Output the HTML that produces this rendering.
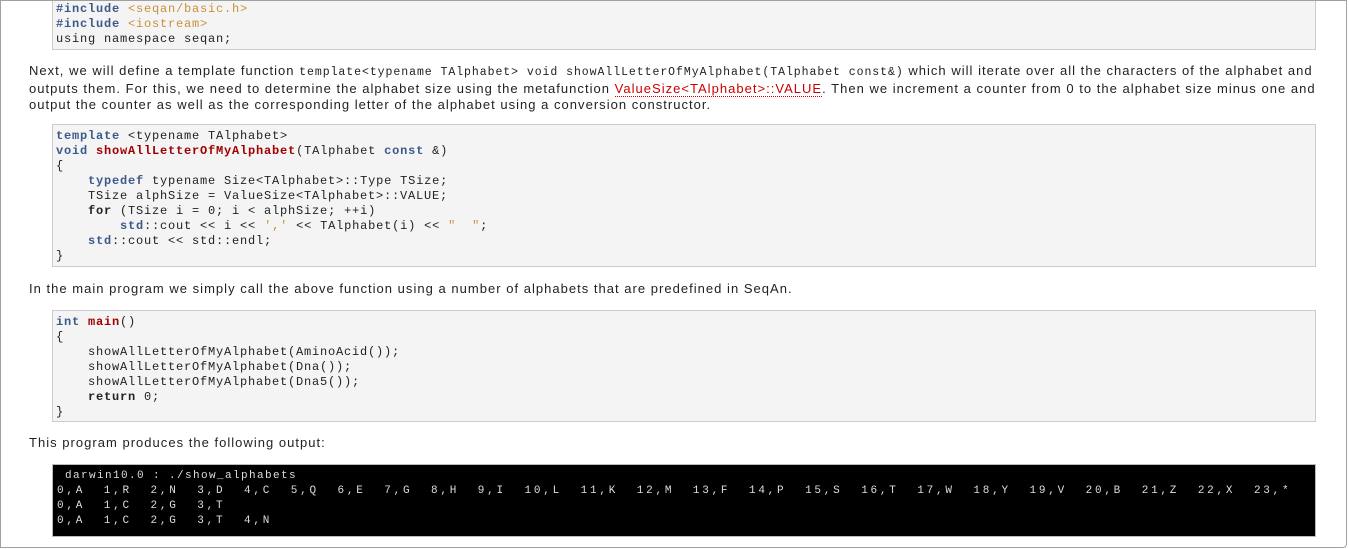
<!DOCTYPE html>
<html><head><meta charset="utf-8"><style>
html,body{margin:0;padding:0;background:#fff;width:1349px;height:549px;overflow:hidden}
#frame{position:absolute;left:0;top:0;width:1347px;height:548px;border:1px solid #a0a0a0;border-radius:0 0 4px 0;box-sizing:border-box;z-index:2;pointer-events:none}
.p{position:absolute;left:29px;font-family:"Liberation Sans",Verdana,sans-serif;font-size:13px;letter-spacing:1.02px;line-height:16px;color:#222;white-space:nowrap;margin:0}
.p code{font-family:"Liberation Mono",monospace;font-size:11.5px;letter-spacing:0.95px;color:#222}
.p a{color:#c00;text-decoration:none;border-bottom:1px dotted #c00}
.code{position:absolute;left:52px;width:1264px;background:#f4f4f4;border:1px solid #ccc;box-sizing:border-box;padding:0 0 0 3px;margin:0;font-family:"Liberation Mono",monospace;font-size:12px;letter-spacing:0.8px;line-height:15px;color:#222;white-space:pre}
.k{color:#3b5a8a;font-weight:bold}
.b{font-weight:bold}
.f{color:#a00000;font-weight:bold}
.s{color:#c8913a}
.term{position:absolute;left:52px;top:464px;width:1264px;height:73px;background:#000;border:1px solid #bbb;box-sizing:border-box;margin:0;padding:4px 0 0 4px;font-family:"Liberation Mono","Liberation Serif",monospace;font-size:11px;letter-spacing:2.75px;line-height:15px;color:#ddd;white-space:pre}
.term .h{letter-spacing:1.4px}
</style></head><body>
<div id="frame"></div>
<pre class="code" style="top:-2px;height:52px;padding-top:3px"><span class="k">#include</span> <span class="s">&lt;seqan/basic.h&gt;</span>
<span class="k">#include</span> <span class="s">&lt;iostream&gt;</span>
using namespace seqan;</pre>
<p class="p" style="top:63px">Next, we will define a template function <code>template&lt;typename TAlphabet&gt; void showAllLetterOfMyAlphabet(TAlphabet const&amp;)</code> which will iterate over all the characters of the alphabet and<br>outputs them. For this, we need to determine the alphabet size using the metafunction <a>ValueSize&lt;TAlphabet&gt;::VALUE</a>. Then we increment a counter from 0 to the alphabet size minus one and<br>output the counter as well as the corresponding letter of the alphabet using a conversion constructor.</p>
<pre class="code" style="top:124px;height:143px;padding-top:4px"><span class="k">template</span> &lt;typename TAlphabet&gt;
<span class="k">void</span> <span class="f">showAllLetterOfMyAlphabet</span>(TAlphabet <span class="k">const</span> &amp;)
{
    <span class="k">typedef</span> typename Size&lt;TAlphabet&gt;::Type TSize;
    TSize alphSize = ValueSize&lt;TAlphabet&gt;::VALUE;
    <span class="b">for</span> (TSize i = 0; i &lt; alphSize; ++i)
        <span class="k">std</span>::cout &lt;&lt; i &lt;&lt; <span class="s">','</span> &lt;&lt; TAlphabet(i) &lt;&lt; <span class="s">"  "</span>;
    <span class="k">std</span>::cout &lt;&lt; std::endl;
}</pre>
<p class="p" style="top:281px">In the main program we simply call the above function using a number of alphabets that are predefined in SeqAn.</p>
<pre class="code" style="top:310px;height:112px;padding-top:4px"><span class="k">int</span> <span class="f">main</span>()
{
    showAllLetterOfMyAlphabet(AminoAcid());
    showAllLetterOfMyAlphabet(Dna());
    showAllLetterOfMyAlphabet(Dna5());
    <span class="b">return</span> 0;
}</pre>
<p class="p" style="top:435px">This program produces the following output:</p>
<pre class="term"><span class="h"> darwin10.0 : ./show_alphabets</span>
0,A  1,R  2,N  3,D  4,C  5,Q  6,E  7,G  8,H  9,I  10,L  11,K  12,M  13,F  14,P  15,S  16,T  17,W  18,Y  19,V  20,B  21,Z  22,X  23,*
0,A  1,C  2,G  3,T
0,A  1,C  2,G  3,T  4,N</pre>
</body></html>
